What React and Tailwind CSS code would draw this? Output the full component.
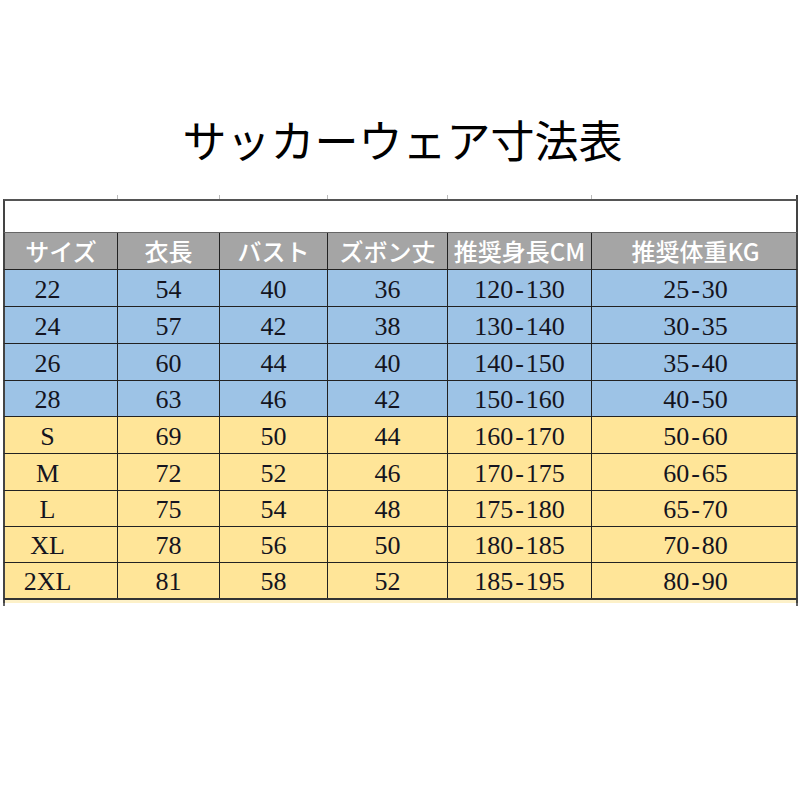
import React from 'react';

const cols = 'grid grid-cols-[113px_102px_108px_120px_144px_207px]';
const headers = ['サイズ', '衣長', 'バスト', 'ズボン丈', '推奨身長CM', '推奨体重KG'];

const rows = [
  { bg: 'bg-[#9dc3e6]', h: 'h-[37px]', cells: ['22', '54', '40', '36', '120-130', '25-30'] },
  { bg: 'bg-[#9dc3e6]', h: 'h-[37px]', cells: ['24', '57', '42', '38', '130-140', '30-35'] },
  { bg: 'bg-[#9dc3e6]', h: 'h-[37px]', cells: ['26', '60', '44', '40', '140-150', '35-40'] },
  { bg: 'bg-[#9dc3e6]', h: 'h-[36px]', cells: ['28', '63', '46', '42', '150-160', '40-50'] },
  { bg: 'bg-[#ffe598]', h: 'h-[37px]', cells: ['S', '69', '50', '44', '160-170', '50-60'] },
  { bg: 'bg-[#ffe598]', h: 'h-[37px]', cells: ['M', '72', '52', '46', '170-175', '60-65'] },
  { bg: 'bg-[#ffe598]', h: 'h-[36px]', cells: ['L', '75', '54', '48', '175-180', '65-70'] },
  { bg: 'bg-[#ffe598]', h: 'h-[36px]', cells: ['XL', '78', '56', '50', '180-185', '70-80'] },
  { bg: 'bg-[#ffe598]', h: 'h-[36px]', cells: ['2XL', '81', '58', '52', '185-195', '80-90'] },
];

const sans = "font-['Noto_Sans_CJK_JP','Noto_Sans',sans-serif]";
const serif = "font-['Liberation_Serif','Noto_Sans_CJK_JP',serif]";

// ranges use a wider dash, like the Mincho hyphen in the source sheet
function Value({ text }) {
  const parts = text.split('-');
  if (parts.length < 2) return text;
  return (
    <>
      {parts[0]}
      <span className="mx-[2px]">-</span>
      {parts[1]}
    </>
  );
}

export default function App() {
  return (
    <div className="w-[800px] h-[800px] bg-white overflow-hidden">
      {/* Title */}
      <div className="h-[195px] pt-[109px]">
        <h1 className={`${sans} text-center text-[44px] leading-[60px] text-black font-normal pl-[5px]`}>
          サッカーウェア寸法表
        </h1>
      </div>

      <div className="ml-[3px] w-[795px]">
        {/* tick marks above the top rule */}
        <div className={`${cols} h-[4px] border-l-2 border-r-2 border-l-transparent border-r-[#444]`}>
          {headers.map((_, i) => (
            <div key={i} className={i < 5 ? 'border-r border-[#bbb]' : ''} />
          ))}
        </div>

        {/* blank title row */}
        <div className="h-[33px] border-t-2 border-[#555] border-l-2 border-l-[#444] border-r-2 border-r-[#444] bg-white" />

        {/* header */}
        <div className={`${cols} h-[37px] bg-[#a5a5a5] border-t border-[#666] border-l-2 border-l-[#444] border-r-2 border-r-[#444]`}>
          {headers.map((h, i) => (
            <div
              key={h}
              className={`${sans} flex items-center justify-center text-white text-[24px] font-medium leading-none ${i < 5 ? 'border-r border-[#222]' : ''}`}
            >
              {h}
            </div>
          ))}
        </div>

        {/* data rows */}
        {rows.map((r, ri) => (
          <div
            key={ri}
            className={`${cols} ${r.h} ${r.bg} border-t border-[#222] border-l-2 border-l-[#444] border-r-2 border-r-[#444]`}
          >
            {r.cells.map((c, i) => (
              <div
                key={i}
                className={`${serif} flex items-center justify-center pt-[3px] text-[26px] leading-none text-[#141420] ${i === 0 ? 'pr-[27px]' : ''} ${i < 5 ? 'border-r border-[#222]' : ''}`}
              >
                <Value text={c} />
              </div>
            ))}
          </div>
        ))}

        {/* bottom rule with faint strip */}
        <div className="h-[5px] bg-[#fdf1c9] border-t-2 border-[#333] border-l-2 border-l-[#444] border-r-2 border-r-[#444]" />
        <div className="h-[3px] border-l-2 border-l-[#666] border-r-2 border-r-[#666]" />
      </div>
    </div>
  );
}
